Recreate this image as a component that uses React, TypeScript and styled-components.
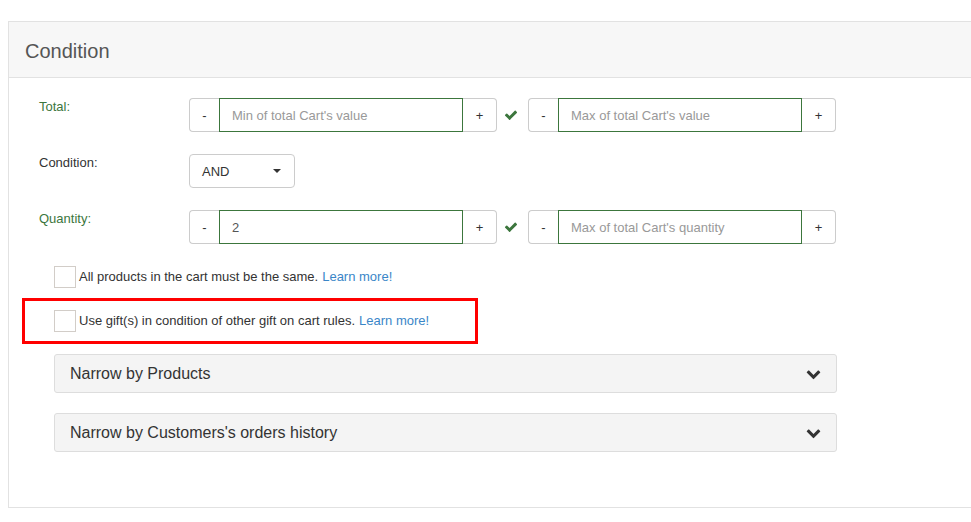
import React from "react";
import styled, { createGlobalStyle } from "styled-components";

const GlobalStyle = createGlobalStyle`
  html, body { margin: 0; padding: 0; background: #fff; overflow: hidden; }
  body { font-family: "Liberation Sans", Arial, sans-serif; font-size: 13px; color: #333; }
  * { box-sizing: border-box; }
`;

const Page = styled.div`
  padding: 21px 0 0 8px;
  width: 971px;
  height: 522px;
`;

const Panel = styled.section`
  width: 990px;
  border: 1px solid #e2e2e2;
  background: #fff;
`;

const PanelHeader = styled.header`
  height: 56px;
  display: flex;
  align-items: center;
  padding: 3px 0 0 16px;
  background: #f7f7f7;
  border-bottom: 1px solid #e2e2e2;
  font-size: 20px;
  color: #555;
`;

const PanelBody = styled.div`
  padding: 20px 0 55px 30px;
  display: flex;
  flex-direction: column;
`;

const FormRow = styled.div`
  display: flex;
  align-items: flex-start;
  margin-bottom: 22px;
`;

const Label = styled.label<{ $valid?: boolean }>`
  width: 150px;
  line-height: 15px;
  padding-top: 1px;
  font-size: 13px;
  color: ${(p) => (p.$valid ? "#3c763d" : "#333")};
`;

const InputGroup = styled.div`
  display: flex;
  height: 34px;
`;

const Addon = styled.span<{ $side: "left" | "right"; $width: number }>`
  width: ${(p) => p.$width}px;
  height: 34px;
  display: flex;
  align-items: center;
  justify-content: center;
  border: 1px solid #ccc;
  background: #fff;
  color: #333;
  font-size: 13px;
  border-radius: ${(p) => (p.$side === "left" ? "4px 0 0 4px" : "0 4px 4px 0")};
  ${(p) => (p.$side === "left" ? "border-right: none;" : "border-left: none;")}
`;

const TextInput = styled.input`
  width: 244px;
  height: 34px;
  border: 1px solid #3c763d;
  padding: 0 12px;
  font-family: "Liberation Sans", Arial, sans-serif;
  font-size: 13px;
  color: #555;
  outline: none;
  &::placeholder { color: #999; }
`;

const CheckMark = styled.span`
  width: 31px;
  height: 34px;
  display: flex;
  align-items: center;
  padding-left: 7px;
  color: #3c763d;
`;

const Select = styled.div`
  width: 106px;
  height: 34px;
  border: 1px solid #ccc;
  border-radius: 4px;
  display: flex;
  align-items: center;
  justify-content: space-between;
  padding: 0 13px 0 12px;
  font-size: 13px;
  color: #333;
`;

const Caret = styled.span`
  width: 0;
  height: 0;
  border-left: 4px solid transparent;
  border-right: 4px solid transparent;
  border-top: 4px solid #333;
`;

const CheckRow = styled.div`
  position: relative;
  display: flex;
  align-items: center;
  margin-left: 15px;
  margin-bottom: 22px;
  font-size: 13px;
  color: #333;
`;

const Box = styled.span`
  width: 22px;
  height: 22px;
  border: 1px solid #d2cdc8;
  background: #fff;
  margin-right: 3px;
  flex: none;
`;

const CheckText = styled.span`
  position: relative;
  top: -1px;
`;

const Link = styled.a`
  color: #3a86c8;
  text-decoration: none;
  margin-left: 4px;
`;

const Highlight = styled.span`
  position: absolute;
  left: -32px;
  top: -12px;
  width: 456px;
  height: 46px;
  border: 3px solid #ff0000;
  pointer-events: none;
`;

const Accordion = styled.div<{ $gap: number }>`
  margin-left: 15px;
  width: 783px;
  height: 39px;
  margin-bottom: ${(p) => p.$gap}px;
  background: #f4f4f4;
  border: 1px solid #ddd;
  border-radius: 3px;
  display: flex;
  align-items: center;
  justify-content: space-between;
  padding: 0 15px 0 15px;
  font-size: 16px;
  color: #333;
`;

const Chevron = () => (
  <svg width="15" height="15" viewBox="0 0 1792 1792" fill="#333">
    <path d="M1683 808l-742 741q-19 19-45 19t-45-19l-742-741q-19-19-19-45.5t19-45.5l166-165q19-19 45-19t45 19l531 531 531-531q19-19 45-19t45 19l166 165q19 19 19 45.5t-19 45.5z" />
  </svg>
);

const Check = () => (
  <svg width="14" height="14" viewBox="0 0 1792 1792" fill="#3c763d">
    <path d="M1671 566q0 40-28 68l-724 724-136 136q-28 28-68 28t-68-28l-136-136-362-362q-28-28-28-68t28-68l136-136q28-28 68-28t68 28l294 295 656-657q28-28 68-28t68 28l136 136q28 28 28 68z" />
  </svg>
);

const RangeInput: React.FC<{ placeholder: string; value?: string }> = ({ placeholder, value }) => (
  <InputGroup>
    <Addon $side="left" $width={30}>-</Addon>
    <TextInput placeholder={placeholder} defaultValue={value} />
    <Addon $side="right" $width={34}>+</Addon>
  </InputGroup>
);

export default function App() {
  return (
    <Page>
      <GlobalStyle />
      <Panel>
        <PanelHeader>Condition</PanelHeader>
        <PanelBody>
          <FormRow>
            <Label $valid>Total:</Label>
            <RangeInput placeholder="Min of total Cart's value" />
            <CheckMark><Check /></CheckMark>
            <RangeInput placeholder="Max of total Cart's value" />
          </FormRow>
          <FormRow>
            <Label>Condition:</Label>
            <Select>
              <span>AND</span>
              <Caret />
            </Select>
          </FormRow>
          <FormRow>
            <Label $valid>Quantity:</Label>
            <RangeInput placeholder="Min of total Cart's quantity" value="2" />
            <CheckMark><Check /></CheckMark>
            <RangeInput placeholder="Max of total Cart's quantity" />
          </FormRow>
          <CheckRow>
            <Box />
            <CheckText>
              All products in the cart must be the same.
              <Link href="#">Learn more!</Link>
            </CheckText>
          </CheckRow>
          <CheckRow>
            <Highlight />
            <Box />
            <CheckText>
              Use gift(s) in condition of other gift on cart rules.
              <Link href="#">Learn more!</Link>
            </CheckText>
          </CheckRow>
          <Accordion $gap={20}>
            <span>Narrow by Products</span>
            <Chevron />
          </Accordion>
          <Accordion $gap={0}>
            <span>Narrow by Customers's orders history</span>
            <Chevron />
          </Accordion>
        </PanelBody>
      </Panel>
    </Page>
  );
}
